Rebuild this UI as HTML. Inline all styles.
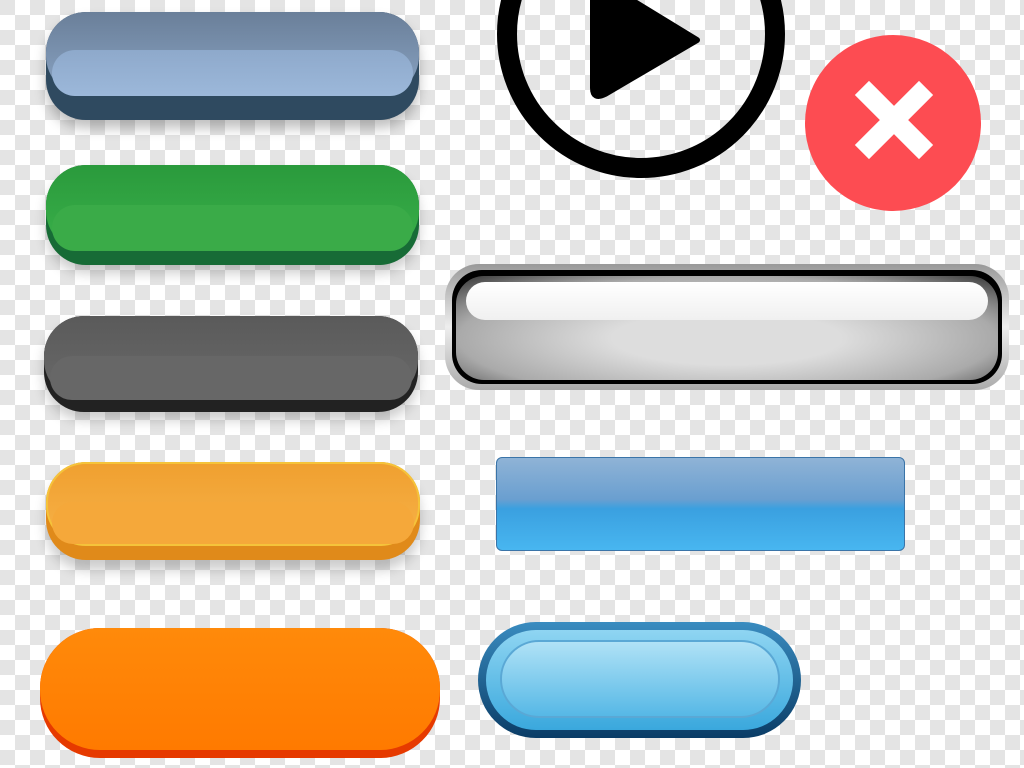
<!DOCTYPE html><html><head><style>
body{margin:0;width:1024px;height:768px;overflow:hidden;position:relative;
background-color:#fff;background-image:linear-gradient(45deg,#e4e4e4 25%,transparent 25%,transparent 75%,#e4e4e4 75%),linear-gradient(45deg,#e4e4e4 25%,transparent 25%,transparent 75%,#e4e4e4 75%);background-size:30px 30px;background-position:15px 0,0 15px;}
.a{position:absolute}
.pill{position:absolute;border-radius:40px}
</style></head><body>
<div class="pill" style="left:46px;top:12px;width:373px;height:108px;background:#2f4a60;box-shadow:0 8px 12px rgba(0,0,0,.25)"></div>
<div class="pill" style="left:46px;top:12px;width:373px;height:84px;background:linear-gradient(#6a7f99,#8aa4c4)"></div>
<div class="pill" style="left:52px;top:50px;width:361px;height:46px;background:linear-gradient(#8ea9cb,#9cb8da);border-radius:30px"></div>
<div class="pill" style="left:46px;top:165px;width:373px;height:100px;background:#176b36;box-shadow:0 8px 12px rgba(0,0,0,.2)"></div>
<div class="pill" style="left:46px;top:165px;width:373px;height:86px;background:linear-gradient(#2a9a3c,#3ab04a)"></div>
<div class="pill" style="left:52px;top:205px;width:361px;height:46px;background:#3aab48;border-radius:30px"></div>
<div class="pill" style="left:44px;top:316px;width:374px;height:96px;background:#222;box-shadow:0 8px 12px rgba(0,0,0,.2)"></div>
<div class="pill" style="left:44px;top:316px;width:374px;height:84px;background:linear-gradient(#5a5a5a,#6a6a6a)"></div>
<div class="pill" style="left:50px;top:356px;width:362px;height:44px;background:#676767;border-radius:30px"></div>
<div class="pill" style="left:46px;top:462px;width:374px;height:98px;background:#e08a1a;box-shadow:0 10px 12px rgba(0,0,0,.2)"></div>
<div class="pill" style="left:46px;top:462px;width:374px;height:84px;background:linear-gradient(#f0a030,#f7b248);border:2px solid #f5c33a;box-sizing:border-box"></div>
<div class="pill" style="left:52px;top:502px;width:362px;height:42px;background:#f5a83a;border-radius:30px"></div>
<div class="pill" style="left:40px;top:628px;width:400px;height:130px;border-radius:60px;background:#e63a00"></div>
<div class="pill" style="left:40px;top:628px;width:400px;height:122px;border-radius:60px;background:linear-gradient(#ff8a0a,#ff7a00)"></div>
<div class="a" style="left:497px;top:-110px;border:20px solid #000;border-radius:50%;width:248px;height:248px"></div>
<svg class="a" style="left:585px;top:0" width="120" height="100"><path d="M8 0 L8 88 Q8 100 20 94 L112 40 L30 -10Z" fill="#000" stroke="#000" stroke-width="6" stroke-linejoin="round"/></svg>
<div class="a" style="left:805px;top:35px;width:176px;height:176px;border-radius:50%;background:#fd4c52"></div>
<svg class="a" style="left:805px;top:35px" width="176" height="176"><path d="M64 60 L114 110 M114 60 L64 110" stroke="#fff" stroke-width="20" stroke-linecap="square"/></svg>
<div class="pill" style="left:445px;top:264px;width:564px;height:126px;border-radius:34px;background:linear-gradient(#999,#eee 50%,#aaa);"></div>
<div class="pill" style="left:452px;top:270px;width:550px;height:114px;border-radius:30px;background:#000"></div>
<div class="pill" style="left:456px;top:276px;width:542px;height:104px;border-radius:28px;background:radial-gradient(ellipse at 50% 60%,#ddd 30%,#aaa 70%,#333 100%)"></div>
<div class="pill" style="left:466px;top:282px;width:522px;height:38px;border-radius:19px;background:linear-gradient(#fff,#f0f0f0)"></div>
<div class="a" style="left:496px;top:457px;width:409px;height:94px;border-radius:6px;border:1px solid #3a74a8;box-sizing:border-box;background:linear-gradient(#8fb3d6 0%,#6a9fd0 45%,#3aa0e0 55%,#48b6f0 100%)"></div>
<div class="pill" style="left:478px;top:622px;width:323px;height:116px;border-radius:58px;background:linear-gradient(#3a8cc0,#0a3c66)"></div>
<div class="pill" style="left:486px;top:630px;width:307px;height:100px;border-radius:50px;background:linear-gradient(#8fd5f2,#3aa8dd)"></div>
<div class="pill" style="left:500px;top:640px;width:280px;height:78px;border-radius:40px;background:linear-gradient(#b0e2f6,#56b8e6);border:2px solid #5aa8d5;box-sizing:border-box"></div>
</body></html>
